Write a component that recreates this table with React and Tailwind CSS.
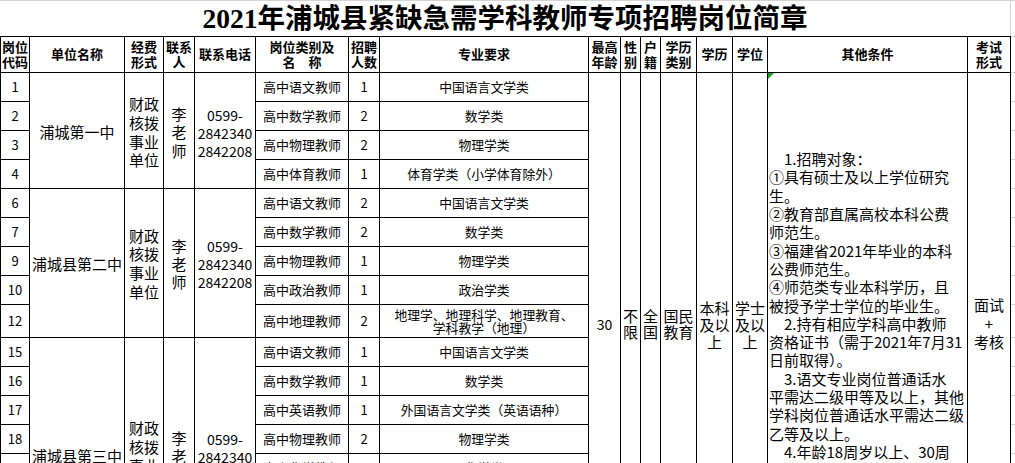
import React from 'react';

const B = 'border-r border-b border-black flex items-center justify-center text-center';

const groups = [
  {
    span: 'row-span-4', unit: '浦城第一中', shift: 'pt-[4px]',
    rows: [
      ['1', '高中语文教师', '1', ['中国语言文学类']],
      ['2', '高中数学教师', '2', ['数学类']],
      ['3', '高中物理教师', '2', ['物理学类']],
      ['4', '高中体育教师', '1', ['体育学类（小学体育除外）']],
    ],
  },
  {
    span: 'row-span-5', unit: '浦城县第二中', shift: 'pt-[2px]',
    rows: [
      ['6', '高中语文教师', '2', ['中国语言文学类']],
      ['7', '高中数学教师', '2', ['数学类']],
      ['9', '高中物理教师', '1', ['物理学类']],
      ['10', '高中政治教师', '1', ['政治学类']],
      ['12', '高中地理教师', '2', ['地理学、地理科学、地理教育、', '学科教学（地理）']],
    ],
  },
  {
    span: 'row-span-8', unit: '浦城县第三中', shift: '',
    rows: [
      ['15', '高中语文教师', '1', ['中国语言文学类']],
      ['16', '高中数学教师', '1', ['数学类']],
      ['17', '高中英语教师', '1', ['外国语言文学类（英语语种）']],
      ['18', '高中物理教师', '2', ['物理学类']],
      ['19', '高中化学教师', '1', ['化学类']],
      ['20', '高中生物教师', '1', ['生物科学类']],
      ['21', '高中历史教师', '1', ['历史学类']],
      ['22', '高中地理教师', '1', ['地理科学类']],
    ],
  },
];

const headers = [
  ['岗位', '代码'],
  ['单位名称'],
  ['经费', '形式'],
  ['联系', '人'],
  ['联系电话'],
  ['岗位类别及', '名　称'],
  ['招聘', '人数'],
  ['专业要求'],
  ['最高', '年龄'],
  ['性', '别'],
  ['户', '籍'],
  ['学历', '类别'],
  ['学历'],
  ['学位'],
  ['其他条件'],
  ['考试', '形式'],
];

const other = [
  [1, '1.招聘对象：'],
  [0, '①具有硕士及以上学位研究'],
  [0, '生。'],
  [0, '②教育部直属高校本科公费'],
  [0, '师范生。'],
  [0, '③福建省2021年毕业的本科'],
  [0, '公费师范生。'],
  [0, '④师范类专业本科学历，且'],
  [0, '被授予学士学位的毕业生。'],
  [1, '2.持有相应学科高中教师'],
  [0, '资格证书（需于2021年7月31'],
  [0, '日前取得）。'],
  [1, '3.语文专业岗位普通话水'],
  [0, '平需达二级甲等及以上，其他'],
  [0, '学科岗位普通话水平需达二级'],
  [0, '乙等及以上。'],
  [1, '4.年龄18周岁以上、30周'],
  [0, '岁以下（1990年1月1日以后'],
  [0, '出生）。'],
];

const tickHeights = [36, 36, 29, 29, 29, 29, 29, 29, 29, 29, 33, 29, 29, 29, 29, 29, 29, 29, 35];

function Lines({ lines }) {
  return (
    <div className="flex flex-col items-center">
      {lines.map((l, i) => (
        <div key={i} className="whitespace-nowrap">{l}</div>
      ))}
    </div>
  );
}

function buildCells() {
  const cells = [];
  headers.forEach((h, i) => {
    cells.push(
      <div key={'h' + i} className={B + ' font-bold text-[13px] leading-[14.6px]'}>
        <Lines lines={h} />
      </div>
    );
  });
  let first = true;
  groups.forEach((g, gi) => {
    g.rows.forEach((r, ri) => {
      const k = gi + '-' + ri;
      cells.push(
        <div key={'c' + k} className={B + ' text-[13px]'}>{r[0]}</div>
      );
      if (ri === 0) {
        cells.push(
          <div key={'u' + k} className={B + ' ' + g.span + ' ' + g.shift + ' text-[15px]'}>
            <span className="whitespace-nowrap">{g.unit}</span>
          </div>
        );
        cells.push(
          <div key={'f' + k} className={B + ' ' + g.span + ' ' + g.shift + ' text-[15px] leading-[18.6px]'}>
            <Lines lines={['财政', '核拨', '事业', '单位']} />
          </div>
        );
        cells.push(
          <div key={'p' + k} className={B + ' ' + g.span + ' ' + g.shift + ' text-[15px] leading-[18.3px]'}>
            <Lines lines={['李', '老', '师']} />
          </div>
        );
        cells.push(
          <div key={'t' + k} className={B + ' ' + g.span + ' ' + g.shift + ' text-[14px] leading-[18px]'}>
            <Lines lines={['0599-', '2842340', '2842208']} />
          </div>
        );
      }
      cells.push(
        <div key={'n' + k} className={B + ' text-[13px]'}>{r[1]}</div>
      );
      cells.push(
        <div key={'q' + k} className={B + ' text-[13px]'}>{r[2]}</div>
      );
      cells.push(
        <div key={'m' + k} className={B + ' text-[12.8px] leading-[13.5px]'}>
          <Lines lines={r[3]} />
        </div>
      );
      if (first) {
        first = false;
        cells.push(
          <div key="age" className={B + ' row-span-17 text-[14px]'}>30</div>
        );
        cells.push(
          <div key="sex" className={B + ' row-span-17 text-[15px] leading-[16.5px]'}>
            <Lines lines={['不', '限']} />
          </div>
        );
        cells.push(
          <div key="hj" className={B + ' row-span-17 text-[15px] leading-[16.5px]'}>
            <Lines lines={['全', '国']} />
          </div>
        );
        cells.push(
          <div key="lb" className={B + ' row-span-17 text-[15px] leading-[16.5px]'}>
            <Lines lines={['国民', '教育']} />
          </div>
        );
        cells.push(
          <div key="xl" className={B + ' row-span-17 text-[15px] leading-[17px]'}>
            <Lines lines={['本科', '及以', '上']} />
          </div>
        );
        cells.push(
          <div key="xw" className={B + ' row-span-17 text-[15px] leading-[17px]'}>
            <Lines lines={['学士', '及以', '上']} />
          </div>
        );
        cells.push(
          <div key="other" className="relative border-r border-b border-black row-span-17 flex flex-col justify-center items-start text-left text-[15px] leading-[18.3px]">
            <svg className="absolute top-0 left-0" width="6" height="6" viewBox="0 0 6 6">
              <polygon points="0,0 6,0 0,6" fill="#1f9a1f" />
            </svg>
            {other.map(([ind, t], i) => (
              <div key={i} className={ind ? 'whitespace-nowrap pl-[16px]' : 'whitespace-nowrap pl-[1px]'}>{t}</div>
            ))}
          </div>
        );
        cells.push(
          <div key="ks" className={B + ' row-span-17 text-[15px] leading-[18.5px]'}>
            <Lines lines={['面试', '+', '考核']} />
          </div>
        );
      }
    });
  });
  return cells;
}

export default function App() {
  return (
    <div className="w-[1015px] h-[463px] overflow-hidden bg-white text-black flex font-['Noto_Sans_CJK_SC',sans-serif]">
      <div className="w-[1011px] flex flex-col shrink-0">
        <div className="h-[36px] shrink-0 border-t border-r border-[#d4d4d4] flex items-center justify-center">
          <span className="font-['Liberation_Serif','Noto_Sans_CJK_SC',serif] font-bold text-[27.5px] leading-none whitespace-nowrap">
            2021年浦城县紧缺急需学科教师专项招聘岗位简章
          </span>
        </div>
        <div className="grid shrink-0 border-l border-t border-black w-[1011px] grid-cols-[29px_95px_39px_31px_61px_93px_31px_209px_32px_20px_20px_36px_36px_35px_200px_43px] grid-rows-[36px_repeat(8,29px)_33px_repeat(7,29px)_35px]">
          {buildCells()}
        </div>
      </div>
      <div className="w-[4px] shrink-0 flex flex-col border-t border-[#d4d4d4]">
        {tickHeights.map((h, i) => (
          <div key={i} className="shrink-0 border-b border-[#d4d4d4]" style={{ height: h + 'px' }} />
        ))}
      </div>
    </div>
  );
}
